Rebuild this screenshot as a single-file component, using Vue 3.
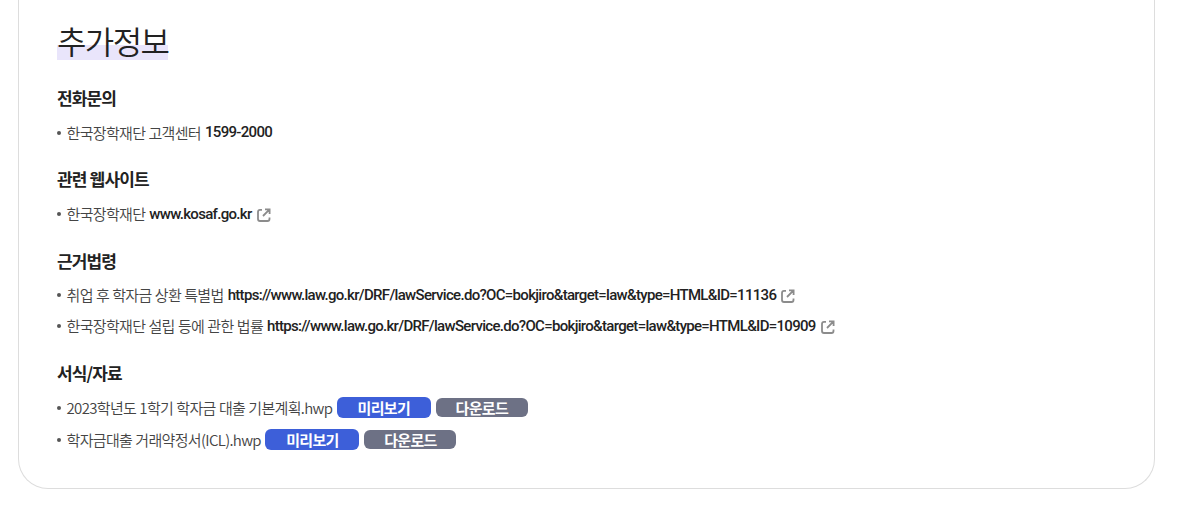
<template>
  <div class="panel">
    <h3 class="title"><span>추가정보</span></h3>
    <section v-for="group in groups" :key="group.name" class="group">
      <h4 class="group-name">{{ group.name }}</h4>
      <ul class="list" :class="{ files: group.files }">
        <li v-for="item in group.items" :key="item.label" class="item">
          <span class="label">{{ item.label }}</span>
          <strong v-if="item.tel" class="value tel">{{ item.tel }}</strong>
          <a v-if="item.url" href="#" class="value">
            {{ item.url }}
            <svg class="icon" width="14" height="14" viewBox="0 0 14 14" fill="none" stroke="#8c8c8c" stroke-width="1.8">
              <path d="M5 1.9H3Q1 1.9 1 3.9V11Q1 13 3 13H10.5Q12.5 13 12.5 11V9.5M8 1.4H12.6V6M12.3 1.7L6 8" />
            </svg>
          </a>
          <template v-if="group.files">
            <button type="button" class="btn preview">미리보기</button>
            <button type="button" class="btn download">다운로드</button>
          </template>
        </li>
      </ul>
    </section>
  </div>
</template>

<script setup>
const law = 'https://www.law.go.kr/DRF/lawService.do?OC=bokjiro&target=law&type=HTML&ID='

const groups = [
  { name: '전화문의', items: [{ label: '한국장학재단 고객센터', tel: '1599-2000' }] },
  { name: '관련 웹사이트', items: [{ label: '한국장학재단', url: 'www.kosaf.go.kr' }] },
  {
    name: '근거법령',
    items: [
      { label: '취업 후 학자금 상환 특별법', url: law + '11136' },
      { label: '한국장학재단 설립 등에 관한 법률', url: law + '10909' },
    ],
  },
  {
    name: '서식/자료',
    files: true,
    items: [
      { label: '2023학년도 1학기 학자금 대출 기본계획.hwp' },
      { label: '학자금대출 거래약정서(ICL).hwp' },
    ],
  },
]
</script>

<style>
body {
  background: #fff;
  overflow: hidden;
}
</style>

<style scoped>
.panel {
  box-sizing: border-box;
  width: 1137px;
  height: 489px;
  margin-left: 18px;
  padding: 22px 38px 0;
  border: 1px solid #ddd;
  border-top: 0;
  border-radius: 0 0 30px 30px;
  color: #222;
  font-family: "Noto Sans CJK KR", sans-serif;
}

.title {
  display: flex;
  height: 38px;
  margin: 0 0 27px;
  font-size: 32px;
  font-weight: 350;
  line-height: 37px;
  letter-spacing: -1.6px;
}

.title span {
  background: linear-gradient(transparent 23px, #e9e5fb 23px);
}

.group {
  margin-bottom: 21px;
}

.group:nth-of-type(2) {
  margin-bottom: 22px;
}

.group-name {
  margin: 0 0 10px;
  font-size: 17px;
  font-weight: 700;
  line-height: 22px;
  letter-spacing: -0.85px;
}

.group:nth-of-type(3) .group-name {
  margin-bottom: 9px;
}

.list {
  display: flex;
  flex-direction: column;
  gap: 3px;
  margin: 0;
  padding: 0;
  list-style: none;
}

.files {
  gap: 4px;
}

.group:nth-of-type(3) .list {
  padding-bottom: 1px;
}

.item {
  display: flex;
  align-items: center;
  height: 28px;
  font-size: 15px;
  line-height: 22px;
  letter-spacing: -0.67px;
}

.item::before {
  content: "";
  width: 4px;
  height: 4px;
  margin-right: 5.5px;
  border-radius: 50%;
  background: #555;
}

.label {
  margin-right: 4px;
  color: #444;
  font-weight: 350;
  word-spacing: 0.5px;
}

.files .label {
  margin-right: 4.5px;
}

.value {
  display: flex;
  align-items: center;
  color: #222;
  font-family: Roboto, sans-serif;
  font-weight: 500;
  letter-spacing: -0.69px;
  text-decoration: none;
}

.tel {
  margin-bottom: 2px;
}

.icon {
  margin: 1px 0 0 5px;
}

.btn {
  height: 21px;
  margin: 0 5px 2px 0;
  padding: 0;
  border: 0;
  border-radius: 6px;
  color: #fff;
  font-family: inherit;
  font-size: 15px;
  font-weight: 700;
  line-height: 21px;
  letter-spacing: -0.67px;
}

.preview {
  width: 94px;
  background: #3d5fd9;
}

.download {
  width: 92px;
  height: 19px;
  line-height: 19px;
  background: #6d7185;
}
</style>
